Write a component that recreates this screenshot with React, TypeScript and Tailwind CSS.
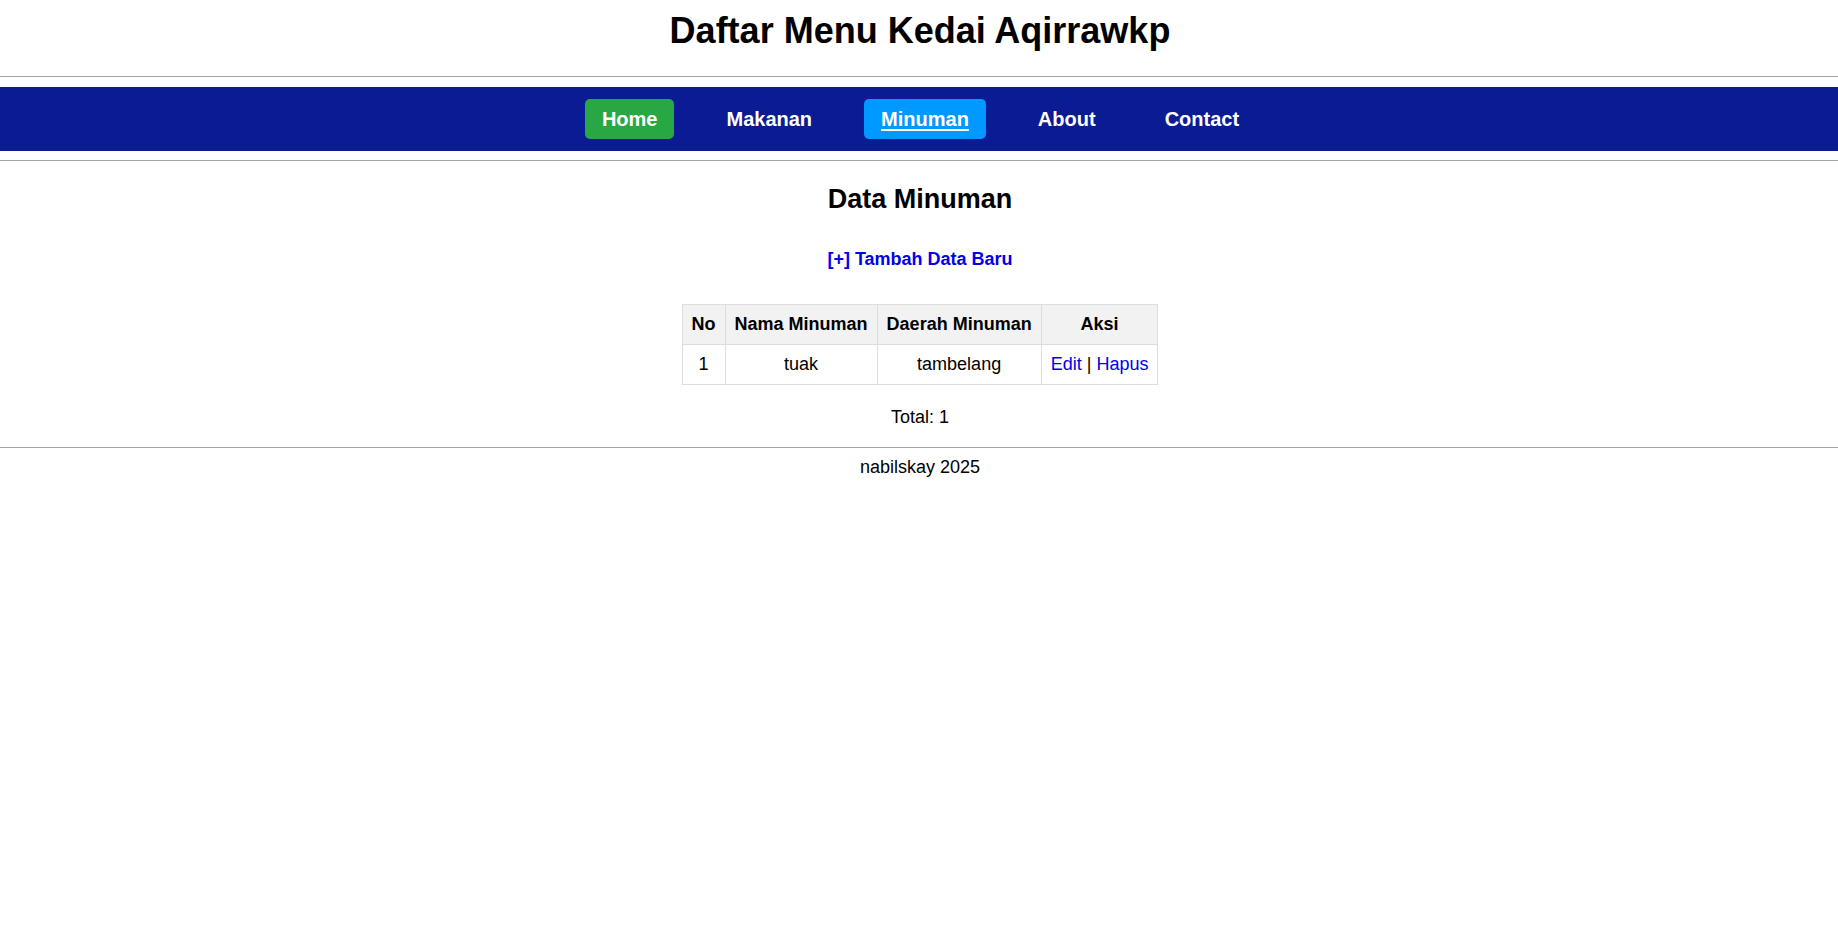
import type { ReactNode } from 'react';

type NavItem = {
  label: string;
  tone?: 'home' | 'active';
};

const NAV: NavItem[] = [
  { label: 'Home', tone: 'home' },
  { label: 'Makanan' },
  { label: 'Minuman', tone: 'active' },
  { label: 'About' },
  { label: 'Contact' },
];

const ROWS = [{ no: 1, nama: 'tuak', daerah: 'tambelang' }];

function Rule({ className = '' }: { className?: string }) {
  return <div className={`h-px bg-[#a3a3a3] ${className}`} />;
}

function Cell({ head, children }: { head?: boolean; children: ReactNode }) {
  if (head) {
    return (
      <th className="border border-[#dddddd] bg-[#f2f2f2] px-[9px] py-[9px] text-center font-bold leading-[21px]">
        {children}
      </th>
    );
  }
  return (
    <td className="border border-[#dddddd] px-[9px] py-[9px] text-center leading-[21px]">
      {children}
    </td>
  );
}

export default function App() {
  return (
    <div className="min-h-screen bg-white font-['Liberation_Sans',Arial,sans-serif] text-[18px] text-black">
      <header className="pt-[10px] pl-[2px]">
        <h1 className="text-center text-[36px] font-bold leading-[41px]">Daftar Menu Kedai Aqirrawkp</h1>
      </header>

      <Rule className="mt-[25px]" />

      <nav className="mt-[10px] flex h-[64px] items-center justify-center gap-[35px] bg-[#0a1b94] pl-[3px]">
        {NAV.map((item) => (
          <a
            key={item.label}
            href="#"
            className={`rounded-[5px] px-[17px] py-[9px] text-[20px] font-bold leading-[22px] text-white ${
              item.tone === 'home'
                ? 'bg-[#28a745] no-underline'
                : item.tone === 'active'
                ? 'bg-[#0099ff] underline decoration-2 underline-offset-[3px]'
                : 'no-underline'
            }`}
          >
            {item.label}
          </a>
        ))}
      </nav>

      <Rule className="mt-[9px]" />

      <main className="flex flex-col items-center pl-[2px]">
        <h2 className="mt-[23px] text-[27px] font-bold leading-[31px]">Data Minuman</h2>

        <a href="#" className="mt-[34px] font-bold leading-[21px] text-[#0000ee]">
          [+] Tambah Data Baru
        </a>

        <table className="mt-[34px] border-collapse">
          <thead>
            <tr>
              <Cell head>No</Cell>
              <Cell head>Nama Minuman</Cell>
              <Cell head>Daerah Minuman</Cell>
              <Cell head>Aksi</Cell>
            </tr>
          </thead>
          <tbody>
            {ROWS.map((r) => (
              <tr key={r.no}>
                <Cell>{r.no}</Cell>
                <Cell>{r.nama}</Cell>
                <Cell>{r.daerah}</Cell>
                <Cell>
                  <a href="#" className="text-[#0000ee]">
                    Edit
                  </a>{' '}
                  |{' '}
                  <a href="#" className="text-[#0000ee]">
                    Hapus
                  </a>
                </Cell>
              </tr>
            ))}
          </tbody>
        </table>

        <p className="mt-[22px] leading-[21px]">Total: {ROWS.length}</p>
      </main>

      <Rule className="mt-[19px]" />

      <footer className="mt-[9px] pl-[2px] text-center leading-[21px]">nabilskay 2025</footer>
    </div>
  );
}
